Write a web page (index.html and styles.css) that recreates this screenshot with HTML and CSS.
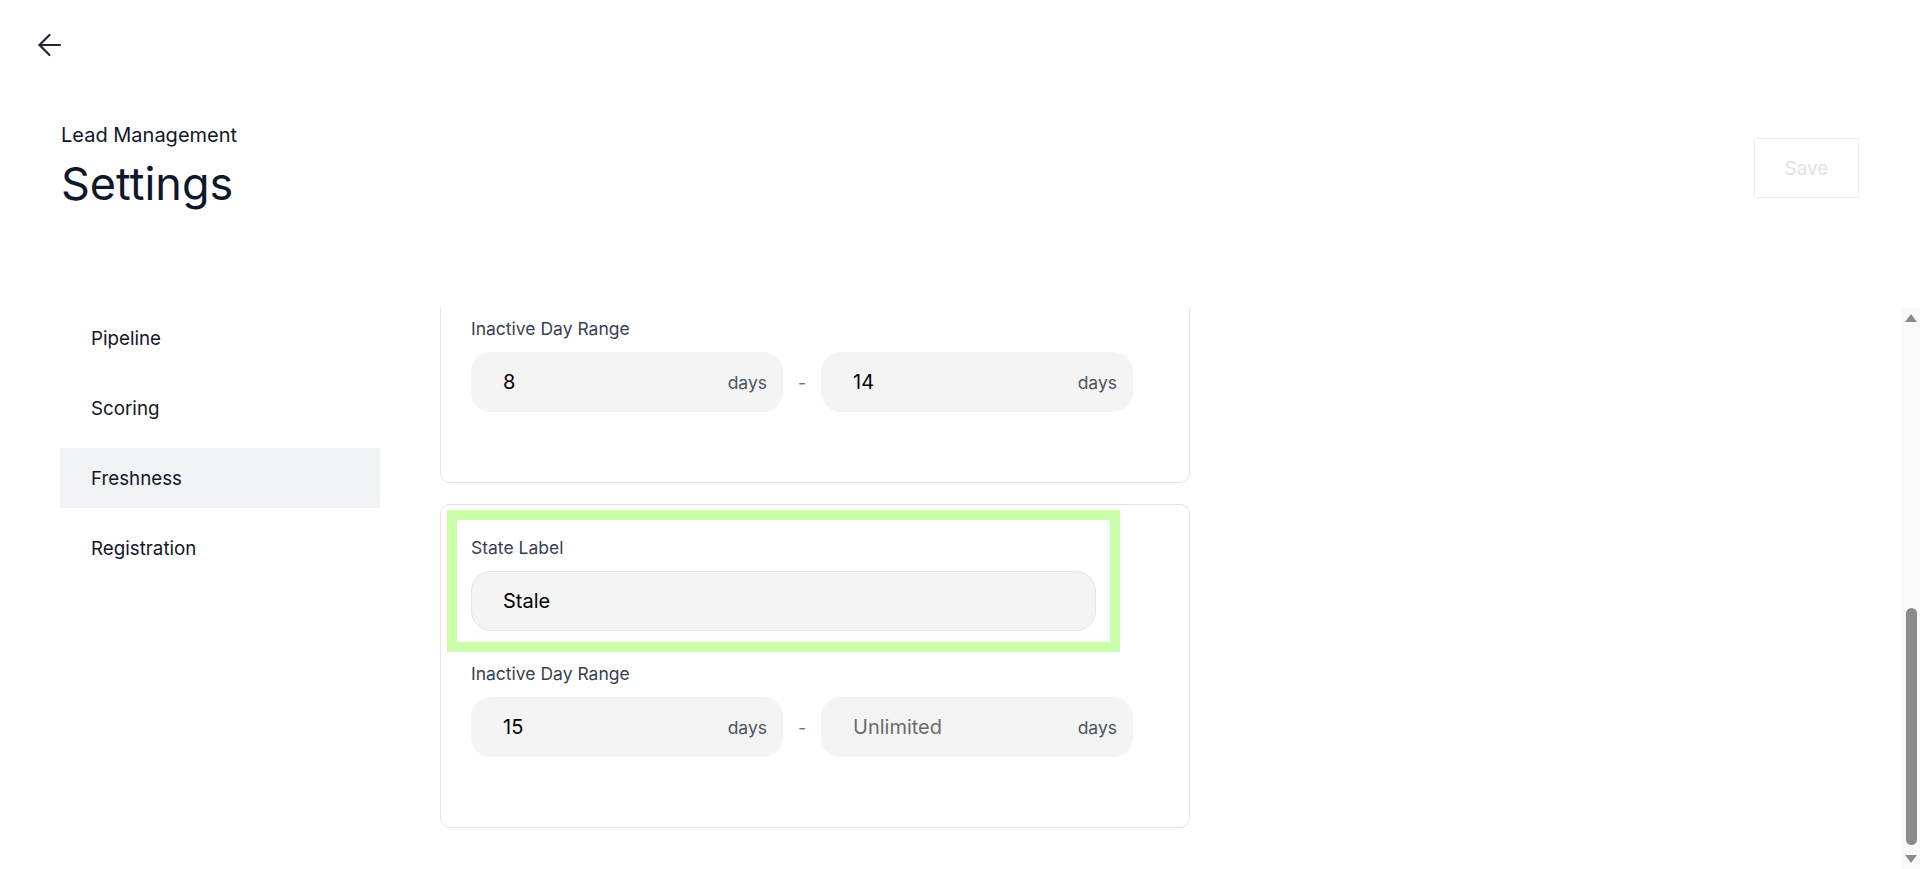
FILE: index.html
```html
<!DOCTYPE html>
<html lang="en">
<head>
<meta charset="utf-8">
<title>Settings · Lead Management</title>
<link rel="stylesheet" href="styles.css">
</head>
<body>
<div class="app">
  <div class="topbar">
    <button class="back" type="button" aria-label="Back">
      <svg width="30" height="30" viewBox="0 0 30 30" fill="none" stroke="#1f2937" stroke-width="2.2" stroke-linecap="round" stroke-linejoin="round">
        <path d="M25 15H4.5"/>
        <path d="M14.5 5 4.5 15l10 10"/>
      </svg>
    </button>
  </div>

  <header class="page-head">
    <div class="titles">
      <p class="eyebrow">Lead Management</p>
      <h1 class="title">Settings</h1>
    </div>
    <button class="save" type="button" disabled>Save</button>
  </header>

  <div class="layout">
    <nav class="sidebar">
      <a class="nav-item" href="#pipeline">Pipeline</a>
      <a class="nav-item" href="#scoring">Scoring</a>
      <a class="nav-item active" href="#freshness">Freshness</a>
      <a class="nav-item" href="#registration">Registration</a>
    </nav>

    <main class="content">
      <div class="content-inner">
        <div class="section-head">
          <h2 class="section-title">Freshness</h2>
          <p class="section-desc">Freshness states describe how recently a lead was active. Each state covers a range of inactive days, and the ranges should not overlap.</p>
        </div>

        <section class="card">
          <div class="field">
            <label class="field-label">State Label</label>
            <input class="text-input" type="text" value="Fresh">
          </div>
          <div class="field">
            <span class="field-label">Inactive Day Range</span>
            <div class="range">
              <div class="range-box"><input type="text" value="0"><span class="unit">days</span></div>
              <span class="range-sep">-</span>
              <div class="range-box"><input type="text" value="7"><span class="unit">days</span></div>
            </div>
          </div>
        </section>

        <section class="card">
          <div class="field">
            <label class="field-label">State Label</label>
            <input class="text-input" type="text" value="Warm">
          </div>
          <div class="field">
            <span class="field-label">Inactive Day Range</span>
            <div class="range">
              <div class="range-box"><input type="text" value="8"><span class="unit">days</span></div>
              <span class="range-sep">-</span>
              <div class="range-box"><input type="text" value="14"><span class="unit">days</span></div>
            </div>
          </div>
        </section>

        <section class="card">
          <div class="field field-focus">
            <label class="field-label">State Label</label>
            <input class="text-input" type="text" value="Stale">
          </div>
          <div class="field">
            <span class="field-label">Inactive Day Range</span>
            <div class="range">
              <div class="range-box"><input type="text" value="15"><span class="unit">days</span></div>
              <span class="range-sep">-</span>
              <div class="range-box"><input type="text" placeholder="Unlimited"><span class="unit">days</span></div>
            </div>
          </div>
        </section>
      </div>
    </main>

    <div class="scrollbar" aria-hidden="true">
      <span class="scroll-arrow up"></span>
      <span class="scroll-thumb"></span>
      <span class="scroll-arrow down"></span>
    </div>
  </div>
</div>
</body>
</html>
```

FILE: styles.css
```css
html,
body {
  margin: 0;
  height: 100%;
}

body {
  font-family: Inter, "Noto Sans", sans-serif;
  color: #0f172a;
  background: #ffffff;
  overflow: hidden;
}

.app {
  height: 100vh;
  display: flex;
  flex-direction: column;
}

/* top bar with the back button */
.topbar {
  padding: 30px 0 0 35px;
  flex: none;
}

.back {
  display: block;
  width: 30px;
  height: 30px;
  padding: 0;
  border: 0;
  background: none;
  cursor: pointer;
}

.back svg {
  display: block;
}

/* page heading */
.page-head {
  flex: none;
  display: flex;
  justify-content: space-between;
  align-items: flex-start;
  padding: 0 61px;
  margin-top: 61px;
}

.eyebrow {
  margin: 0;
  font-size: 20px;
  line-height: 28px;
  color: #0f172a;
}

.title {
  margin: 8px 0 0;
  font-size: 45px;
  line-height: 54px;
  font-weight: 400;
  color: #0f172a;
}

.save {
  margin-top: 17px;
  width: 105px;
  height: 60px;
  border: 1px solid #ececec;
  border-radius: 2px;
  background: #ffffff;
  color: #e2e2e2;
  font-family: Inter, "Noto Sans", sans-serif;
  font-size: 18.75px;
}

/* sidebar + scrolling content */
.layout {
  position: relative;
  flex: 1;
  min-height: 0;
  display: flex;
  gap: 60px;
  padding-left: 60px;
  margin-top: 97px;
}

.sidebar {
  width: 320px;
  flex: none;
  display: flex;
  flex-direction: column;
  gap: 10px;
}

.nav-item {
  height: 60px;
  display: flex;
  align-items: center;
  padding-left: 31px;
  font-size: 18.75px;
  color: #111827;
  text-decoration: none;
}

.nav-item.active {
  background: #f1f3f6;
}

.content {
  flex: 1;
  min-width: 0;
  overflow-y: auto;
  scrollbar-width: none;
  display: flex;
  flex-direction: column-reverse;
}

.content-inner {
  flex: none;
  width: 750px;
  padding-bottom: 41px;
}

.section-head {
  padding-top: 60px;
  margin-bottom: 40px;
}

.section-title {
  margin: 0;
  font-size: 25px;
  line-height: 35px;
  font-weight: 500;
}

.section-desc {
  margin: 10px 0 0;
  font-size: 17.5px;
  line-height: 25px;
  color: #4b5563;
}

/* state cards */
.card {
  border: 1px solid #e4e4e7;
  border-radius: 10px;
  padding: 30px 30px 70px;
  background: #ffffff;
}

.card + .card {
  margin-top: 21px;
}

.field {
  position: relative;
}

.field + .field {
  margin-top: 30px;
}

.field-label {
  display: block;
  font-size: 17.5px;
  line-height: 25px;
  color: #374151;
  margin-bottom: 11px;
}

.text-input {
  display: block;
  box-sizing: border-box;
  width: 625px;
  height: 60px;
  border: 1px solid #e4e4e7;
  border-radius: 20px;
  background: #f4f4f4;
  padding: 0 31px;
  font-family: Inter, "Noto Sans", sans-serif;
  font-size: 20px;
  color: #000000;
  outline: none;
}

.range {
  display: flex;
  align-items: center;
  width: 662px;
}

.range-box {
  box-sizing: border-box;
  width: 312px;
  height: 60px;
  border-radius: 20px;
  background: #f4f4f4;
  display: flex;
  align-items: center;
  padding: 0 16px 0 32px;
}

.range-box input {
  flex: 1;
  min-width: 0;
  border: 0;
  padding: 0;
  background: transparent;
  font-family: Inter, "Noto Sans", sans-serif;
  font-size: 20px;
  color: #000000;
  outline: none;
}

.range-box input::placeholder {
  color: #6b6b6b;
}

.unit {
  font-size: 17.5px;
  color: #4b5563;
}

.range-sep {
  width: 38px;
  text-align: center;
  font-size: 17.5px;
  color: #6b7280;
}

/* focus ring around the label being edited */
.field-focus {
  width: 625px;
}

.field-focus::after {
  content: "";
  position: absolute;
  left: -24px;
  right: -24px;
  top: -25px;
  bottom: -21px;
  border: 10px solid #ccffaa;
  pointer-events: none;
}

/* scrollbar drawn over the right edge of the scroll area */
.scrollbar {
  position: absolute;
  top: 0;
  right: 0;
  bottom: 0;
  width: 19px;
  background: #f9f9f9;
  display: flex;
  flex-direction: column;
  align-items: center;
  padding: 6px 0 6px 1px;
  box-sizing: border-box;
}

.scroll-arrow {
  width: 0;
  height: 0;
  border-left: 6px solid transparent;
  border-right: 6px solid transparent;
}

.scroll-arrow.up {
  border-bottom: 8px solid #8a8a8a;
}

.scroll-arrow.down {
  border-top: 8px solid #8a8a8a;
}

.scroll-thumb {
  width: 11px;
  height: 237px;
  border-radius: 6px;
  background: #8b8b8b;
  margin-top: auto;
  margin-bottom: 10px;
}
```
